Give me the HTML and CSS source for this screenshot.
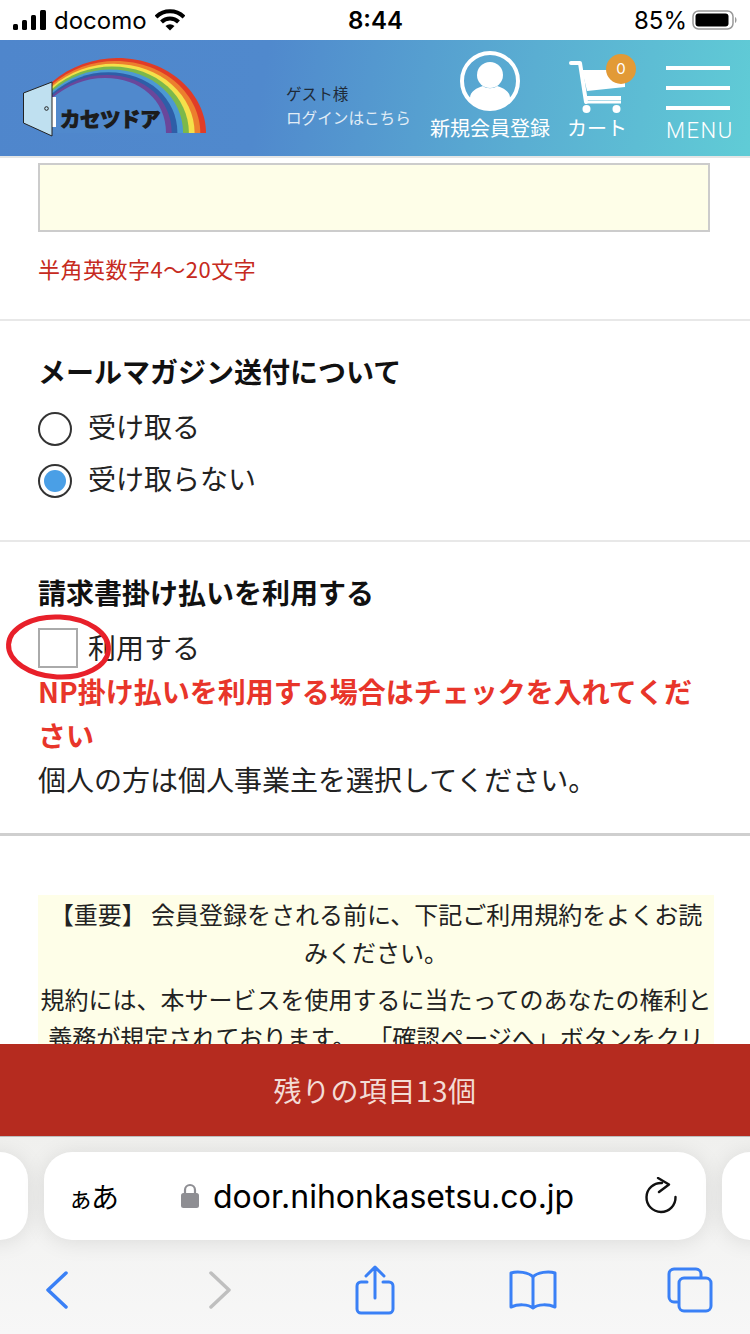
FILE: index.html
```html
<!DOCTYPE html>
<html lang="ja">
<head>
  <meta charset="UTF-8">
  <meta name="viewport" content="width=device-width, initial-scale=1.0">
  <title>会員登録</title>
  <link rel="stylesheet" href="styles.css">
</head>
<body>
  <div class="phone">
    <div class="status-bar">
      <div class="status-left">
        <svg class="signal" width="34" height="22" viewBox="0 0 34 22">
          <rect x="0" y="15" width="5" height="6" rx="1.5"/>
          <rect x="9" y="11" width="5" height="10" rx="1.5"/>
          <rect x="18" y="6" width="5" height="15" rx="1.5"/>
          <rect x="27" y="1" width="6" height="20" rx="1.5"/>
        </svg>
        <span>docomo</span>
        <svg class="wifi" width="30" height="22" viewBox="0 0 30 22">
          <path d="M1 8 A20 20 0 0 1 29 8" fill="none" stroke="#000" stroke-width="4"/>
          <path d="M6.5 13 A12 12 0 0 1 23.500 13" fill="none" stroke="#000" stroke-width="4"/>
          <path d="M10.500 17 L15 21.500 L19.500 17 A7 7 0 0 0 10.500 17Z"/>
        </svg>
      </div>
      <div class="status-time">8:44</div>
      <div class="status-right">
        <span>85%</span>
        <svg width="46" height="24" viewBox="0 0 46 24">
          <rect x="1" y="3" width="40" height="18" rx="5.500" fill="none" stroke="#999" stroke-width="1.500"/>
          <rect x="3.500" y="5.500" width="33" height="13" rx="3"/>
          <path d="M43 9 C45 10 45 14 43 15Z" fill="#999"/>
        </svg>
      </div>
    </div>

    <header class="site-header">
      <svg class="logo" width="286" height="116" viewBox="0 40 286 116">
        <path fill="#e03c27" d="M52 82C70 66 95 58 117 58C170 58 206 95 206 133H52Z"/>
        <path fill="#ec7f2e" d="M52 84.300C69.700 68.700 93.600 60.900 115.300 60.900C165.700 60.900 200.300 95.700 200.300 133H52Z"/>
        <path fill="#f4e04a" d="M52 86.600C69.400 71.400 92.100 63.700 113.600 63.700C161.400 63.700 194.600 96.400 194.600 133H52Z"/>
        <path fill="#7cb84a" d="M52 88.900C69.100 74.100 90.700 66.600 111.900 66.600C157.100 66.600 188.900 97.100 188.900 133H52Z"/>
        <path fill="#4c99d3" d="M52 91.100C68.900 76.900 89.300 69.400 110.100 69.400C152.900 69.400 183.100 97.900 183.100 133H52Z"/>
        <path fill="#2e5ea8" d="M52 93.400C68.600 79.600 87.900 72.300 108.400 72.300C148.600 72.300 177.400 98.600 177.400 133H52Z"/>
        <path fill="#6a479b" d="M52 95.700C68.300 82.300 86.400 75.100 106.700 75.100C144.300 75.100 171.700 99.300 171.700 133H52Z"/>
        <path fill="#5089cd" d="M52 98C68 85 85 78 105 78C140 78 166 100 166 133H52Z"/>
        <rect x="52" y="97" width="4" height="30" fill="#fff"/>
        <polygon points="23.500,93 52,82 52,136 23.500,123" fill="#bfe0f0" stroke="#222" stroke-width="1"/>
        <circle cx="46.500" cy="108.500" r="1.800" fill="none" stroke="#222" stroke-width="1"/>
        <text class="logo-text" x="60" y="127">カセツドア</text>
      </svg>

      <div class="guest">
        <div class="guest-name">ゲスト様</div>
        <div class="guest-login">ログインはこちら</div>
      </div>

      <div class="nav-item nav-member">
        <svg width="60" height="60" viewBox="0 0 60 60">
          <defs>
            <clipPath id="face"><circle cx="30" cy="30" r="27"/></clipPath>
          </defs>
          <circle cx="30" cy="30" r="28" fill="none" stroke="#fff" stroke-width="4"/>
          <circle cx="30" cy="24" r="13" fill="#fff"/>
          <path clip-path="url(#face)" d="M10 60V47C10 40 17 37 23 35C26 38 34 38 37 35C43 37 50 40 50 47V60Z" fill="#fff"/>
        </svg>
        <span>新規会員登録</span>
      </div>

      <div class="nav-item nav-cart">
        <div class="cart-icon">
          <svg width="56" height="56" viewBox="0 0 56 56">
            <path d="M2 3H11L17 42" fill="none" stroke="#fff" stroke-width="4" stroke-linecap="round" stroke-linejoin="round"/>
            <path d="M13 10H57V27L18 31Z" fill="#fff"/>
            <path d="M16 38H52" stroke="#fff" stroke-width="4"/>
            <path d="M16 42H52" stroke="#fff" stroke-width="3"/>
            <circle cx="17.500" cy="49" r="4" fill="#fff"/>
            <circle cx="47.500" cy="49" r="4" fill="#fff"/>
          </svg>
          <div class="cart-badge">0</div>
        </div>
        <span>カート</span>
      </div>

      <div class="nav-item nav-menu">
        <div class="burger">
          <i></i><i></i><i></i>
        </div>
        <span>MENU</span>
      </div>
    </header>

    <main class="content">
      <div class="form-section section-password">
        <div class="text-input"></div>
        <p class="hint">半角英数字4〜20文字</p>
      </div>

      <div class="form-section section-mail">
        <h2>メールマガジン送付について</h2>
        <label class="option">
          <span class="radio"></span>受け取る
        </label>
        <label class="option">
          <span class="radio radio-on"></span>受け取らない
        </label>
      </div>

      <div class="form-section section-invoice">
        <h2>請求書掛け払いを利用する</h2>
        <label class="option option-check">
          <span class="checkbox"></span>利用する
        </label>
        <p class="warn">NP掛け払いを利用する場合はチェックを入れてください</p>
        <p class="note">個人の方は個人事業主を選択してください。</p>
      </div>

      <div class="notice">
        <p>【重要】 会員登録をされる前に、下記ご利用規約をよくお読みください。</p>
        <p>規約には、本サービスを使用するに当たってのあなたの権利と義務が規定されております。&ensp;「確認ページへ」ボタンをクリックすると、本規約に同意したものとみなします。</p>
      </div>
    </main>

    <div class="remaining">残りの項目13個</div>

    <div class="safari">
      <div class="url-row">
        <div class="side-pill"></div>
        <div class="url-pill">
          <span class="aa"><small>ぁ</small>あ</span>
          <svg class="lock" width="18" height="26" viewBox="0 0 18 26">
            <path d="M4 12V7A5 5 0 0 1 14 7V12" fill="none" stroke="#8e8e93" stroke-width="2.200"/>
            <rect x="0" y="10" width="18" height="15" rx="2.500" fill="#8e8e93"/>
          </svg>
          <span class="url">door.nihonkasetsu.co.jp</span>
          <svg class="reload" width="34" height="38" viewBox="0 0 34 38">
            <path d="M18 6A14.500 14.500 0 1 0 31.500 20" fill="none" stroke="#111" stroke-width="2.400" stroke-linecap="round"/>
            <path d="M14 1L25 7.500L15 15" fill="none" stroke="#111" stroke-width="2.400" stroke-linecap="round" stroke-linejoin="round"/>
          </svg>
        </div>
        <div class="side-pill"></div>
      </div>

      <div class="tool-row">
        <svg width="24" height="38" viewBox="0 0 24 38">
          <path d="M21 2L3 19L21 36" class="tool-line"/>
        </svg>
        <svg width="24" height="38" viewBox="0 0 24 38">
          <path d="M3 2L21 19L3 36" class="tool-line tool-off"/>
        </svg>
        <svg width="40" height="50" viewBox="0 0 40 50">
          <path d="M12 17H6A4 4 0 0 0 2 21V44A4 4 0 0 0 6 48H34A4 4 0 0 0 38 44V21A4 4 0 0 0 34 17H28" class="tool-line thin"/>
          <path d="M20 33V3M11 11L20 2L29 11" class="tool-line thin"/>
        </svg>
        <svg width="48" height="40" viewBox="0 0 48 40">
          <path d="M24 7C20 2 8 1 2 3V37C9 34 19 34 24 38C29 34 39 34 46 37V3C40 1 28 2 24 7V38" class="tool-line thin"/>
        </svg>
        <svg width="46" height="46" viewBox="0 0 46 46">
          <path d="M10 35H7A5 5 0 0 1 2 30V7A5 5 0 0 1 7 2H29A5 5 0 0 1 34 7V10" class="tool-line thin"/>
          <rect x="12" y="11" width="32" height="33" rx="5" class="tool-line thin"/>
        </svg>
      </div>
    </div>

    <!-- 赤丸の手書き注釈 -->
    <svg class="annotation" width="120" height="76" viewBox="0 0 120 76">
      <ellipse cx="58.500" cy="38" rx="50" ry="30" transform="rotate(3 58 38)" fill="none" stroke="#e8202a" stroke-width="5"/>
    </svg>
  </div>
</body>
</html>
```

FILE: styles.css
```css
* {
  box-sizing: border-box;
  margin: 0;
  padding: 0;
}

body {
  width: 750px;
  height: 1334px;
  overflow: hidden;
  background: #fff;
  font-family: "Noto Sans CJK JP", "Noto Sans", sans-serif;
  color: #222;
  text-spacing-trim: space-all;
}

.phone {
  position: relative;
  display: flex;
  flex-direction: column;
  width: 750px;
  height: 1334px;
  overflow: hidden;
}

/* status bar */
.status-bar {
  display: flex;
  align-items: center;
  justify-content: space-between;
  flex: 0 0 40px;
  padding: 0 12px 0 13px;
  font-family: Inter, "Liberation Sans", sans-serif;
  font-size: 24px;
  color: #000;
}

.status-left,
.status-right {
  display: flex;
  align-items: center;
  width: 260px;
}

.status-right {
  justify-content: flex-end;
  gap: 5px;
  padding-right: 0;
}

.signal {
  margin-right: 7px;
}

.wifi {
  margin-left: 8px;
}

.status-time {
  font-weight: 600;
  font-size: 24px;
}

/* site header */
.site-header {
  display: flex;
  flex: 0 0 118px;
  height: 118px;
  border-bottom: 2px solid #e4e6e6;
  background: linear-gradient(100deg, #4f86cc 0%, #5089cd 35%, #5aaed2 70%, #60ccd6 100%);
  color: #fff;
}

.logo {
  flex: 0 0 286px;
}

.logo-text {
  font-size: 20.500px;
  font-weight: 700;
  fill: #1c1c1c;
  stroke: #1c1c1c;
  stroke-width: 1.200px;
  letter-spacing: -0.500px;
}

.guest {
  flex: 0 0 144px;
  padding-top: 41px;
  font-size: 15.600px;
  line-height: 24px;
}

.guest-name {
  color: #1f2a38;
}

.guest-login {
  color: #e2edf6;
}

.nav-item {
  display: flex;
  flex-direction: column;
  align-items: center;
  font-size: 20px;
  line-height: 28px;
  white-space: nowrap;
}

.nav-member {
  flex: 0 0 120px;
  padding-top: 11px;
}

.nav-member span {
  margin-top: 3px;
}

.nav-cart {
  flex: 0 0 58px;
  margin-left: 17px;
  padding-top: 20px;
}

.nav-cart span {
  margin-top: -2px;
}

.cart-icon {
  position: relative;
  width: 56px;
  height: 56px;
}

.cart-badge {
  position: absolute;
  top: -6px;
  left: 37px;
  width: 30px;
  height: 30px;
  border-radius: 50%;
  background: #e29a36;
  font-family: Inter, sans-serif;
  font-size: 15px;
  line-height: 30px;
  text-align: center;
}

.nav-menu {
  flex: 0 0 68px;
  margin-left: 35px;
  padding-top: 26px;
  font-family: Roboto, "Noto Sans", sans-serif;
  font-size: 22px;
  font-weight: 300;
  letter-spacing: 1.500px;
}

.nav-menu span {
  margin-left: 4px;
}

.burger {
  display: flex;
  flex-direction: column;
  gap: 16px;
  width: 64px;
  margin-bottom: 7px;
}

.burger i {
  display: block;
  height: 4px;
  background: #fff;
}

/* form */
.content {
  flex: 1;
  min-height: 0;
  overflow: hidden;
}

.form-section {
  padding: 0 40px 0 38px;
  border-bottom: 2px solid #e8e8e8;
}

.section-password {
  height: 163px;
  padding-top: 5px;
}

.text-input {
  height: 69px;
  border: 2px solid #cccccc;
  background: #fefee8;
}

.hint {
  margin-top: 22px;
  color: #c62a20;
  font-size: 22px;
  line-height: 28px;
  letter-spacing: 0.500px;
}

.section-mail {
  height: 221px;
  padding-top: 29px;
}

.section-invoice {
  height: 294px;
  padding-top: 29px;
  border-bottom: 3px solid #cfcfcf;
}

h2 {
  font-size: 28px;
  font-weight: 700;
  line-height: 42px;
  color: #111;
}

.option {
  display: flex;
  align-items: center;
  height: 52px;
  font-size: 28px;
  color: #222;
}

.section-mail h2 {
  margin-bottom: 8px;
}

.radio {
  width: 34px;
  height: 34px;
  margin-top: 6px;
  margin-right: 16px;
  border: 2px solid #333;
  border-radius: 50%;
}

.radio-on {
  position: relative;
}

.radio-on::after {
  content: "";
  position: absolute;
  inset: 4px;
  border-radius: 50%;
  background: #4a9fe6;
}

.option-check {
  height: 44px;
  margin-top: 12px;
}

.checkbox {
  width: 40px;
  height: 40px;
  margin-top: 2px;
  margin-right: 10px;
  border: 2px solid #aaa;
}

.warn {
  font-size: 28px;
  font-weight: 700;
  line-height: 44px;
  color: #e8352a;
}

.note {
  font-size: 28px;
  line-height: 44px;
  color: #222;
}

.notice {
  width: 676px;
  margin: 59px 0 0 38px;
  background: #fefee8;
  font-size: 24px;
  line-height: 38px;
  text-align: center;
}

.notice p {
  margin-bottom: 9px;
}

/* fixed red bar */
.remaining {
  flex: 0 0 92px;
  background: #b52b1f;
  color: #f3dcd6;
  font-size: 28px;
  line-height: 92px;
  letter-spacing: 0.500px;
  text-align: center;
}

/* safari toolbar */
.safari {
  flex: 0 0 198px;
  border-top: 1px solid #bdbdbd;
  background: linear-gradient(#f0f0ee, #f7f7f7);
}

.url-row {
  display: flex;
  justify-content: center;
  gap: 16px;
  padding-top: 15px;
}

.side-pill,
.url-pill {
  flex: 0 0 auto;
  height: 88px;
  border-radius: 28px;
  background: #fff;
  box-shadow: 0 2px 22px rgba(0, 0, 0, 0.1);
}

.side-pill {
  width: 60px;
}

.url-pill {
  display: flex;
  align-items: center;
  width: 662px;
  color: #000;
}

.aa {
  width: 113px;
  margin-left: 24px;
  font-size: 28px;
}

.aa small {
  margin-right: -2px;
  font-size: 25px;
}

.lock {
  margin-right: 14px;
}

.url {
  width: 431px;
  font-family: Inter, "Noto Sans", sans-serif;
  font-size: 32px;
}

.tool-row {
  display: grid;
  grid-template-columns: 158px 168px 142px 174px 140px;
  justify-items: center;
  align-items: center;
  width: 782px;
  height: 78px;
  margin: 11px 0 0 -22px;
}

.tool-line {
  fill: none;
  stroke: #3a80f6;
  stroke-width: 3.500px;
  stroke-linecap: round;
  stroke-linejoin: round;
}

.tool-line.thin {
  stroke-width: 3px;
}

.tool-off {
  stroke: #bfbfbf;
}

.annotation {
  position: absolute;
  top: 609px;
  left: 0;
}
```
